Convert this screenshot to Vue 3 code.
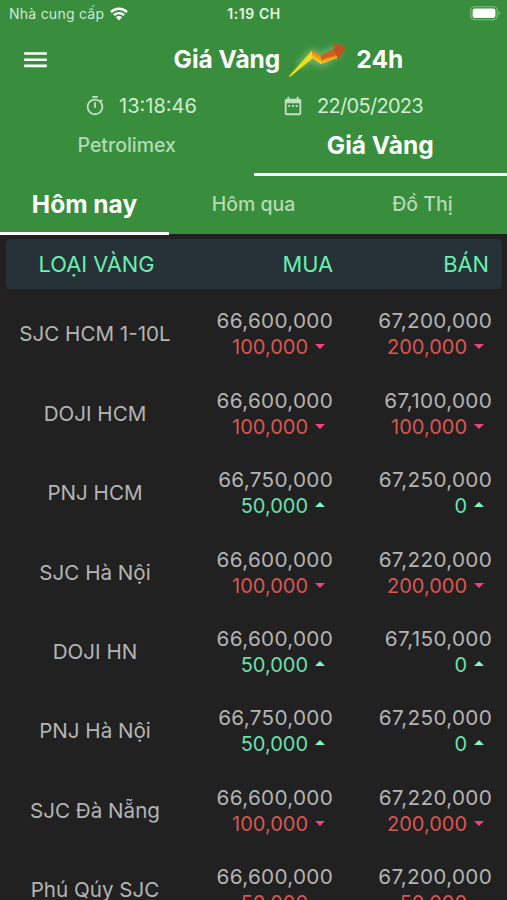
<script setup>
const rows = [
  { name: 'SJC HCM 1-10L', buy: '66,600,000', buyDiff: '100,000', buyUp: false, sell: '67,200,000', sellDiff: '200,000', sellUp: false },
  { name: 'DOJI HCM', buy: '66,600,000', buyDiff: '100,000', buyUp: false, sell: '67,100,000', sellDiff: '100,000', sellUp: false },
  { name: 'PNJ HCM', buy: '66,750,000', buyDiff: '50,000', buyUp: true, sell: '67,250,000', sellDiff: '0', sellUp: true },
  { name: 'SJC Hà Nội', buy: '66,600,000', buyDiff: '100,000', buyUp: false, sell: '67,220,000', sellDiff: '200,000', sellUp: false },
  { name: 'DOJI HN', buy: '66,600,000', buyDiff: '50,000', buyUp: true, sell: '67,150,000', sellDiff: '0', sellUp: true },
  { name: 'PNJ Hà Nội', buy: '66,750,000', buyDiff: '50,000', buyUp: true, sell: '67,250,000', sellDiff: '0', sellUp: true },
  { name: 'SJC Đà Nẵng', buy: '66,600,000', buyDiff: '100,000', buyUp: false, sell: '67,220,000', sellDiff: '200,000', sellUp: false },
  { name: 'Phú Qúy SJC', buy: '66,600,000', buyDiff: '50,000', buyUp: false, sell: '67,200,000', sellDiff: '50,000', sellUp: false },
]
</script>

<template>
  <div class="screen">
    <header class="top">
      <div class="status">
        <div class="carrier">
          <span>Nhà cung cấp</span>
          <svg class="wifi" viewBox="0 0 18 14">
            <g fill="none" stroke="#fff" stroke-width="2.4">
              <path d="M1 5.1a11.3 11.3 0 0 1 16 0" />
              <path d="M3.9 8.2a7.2 7.2 0 0 1 10.2 0" />
            </g>
            <path d="M9 13.6 5.9 10.3a4.4 4.4 0 0 1 6.2 0z" fill="#fff" />
          </svg>
        </div>
        <span class="clock">1:19 CH</span>
        <div class="power">
          <svg class="battery" viewBox="0 0 31 15">
            <rect x=".75" y=".75" width="26.5" height="13" rx="4" fill="none" stroke="#84bd87" stroke-width="1.1" />
            <rect x="2.6" y="2.6" width="22.8" height="9.3" rx="2.2" fill="#fff" />
            <path d="M28.600 5v4.600c1.800-.8 1.800-3.800 0-4.600z" fill="#84bd87" />
          </svg>
        </div>
      </div>

      <div class="bar">
        <svg class="menu" viewBox="0 0 24 16">
          <path d="M.2 1.500h22.600M.2 7.700h22.600M.2 13.900h22.600" stroke="#fff" stroke-width="2.600" />
        </svg>
        <h1 class="title">
          <span class="t1">Giá Vàng</span>
          <svg class="trend" viewBox="0 0 76 56">
            <defs>
              <linearGradient id="shaft" gradientUnits="userSpaceOnUse" x1="46" y1="20" x2="49.500" y2="31">
                <stop offset="0" stop-color="#c05a22" />
                <stop offset=".55" stop-color="#d8621c" />
                <stop offset=".72" stop-color="#f0a01c" />
                <stop offset="1" stop-color="#f6dc16" />
              </linearGradient>
              <linearGradient id="bend" gradientUnits="userSpaceOnUse" x1="38" y1="21.500" x2="34" y2="29">
                <stop offset="0" stop-color="#d0701e" />
                <stop offset=".5" stop-color="#eea01c" />
                <stop offset="1" stop-color="#f6e016" />
              </linearGradient>
              <filter id="glow" x="-40%" y="-40%" width="180%" height="180%">
                <feGaussianBlur stdDeviation="3.6" />
              </filter>
            </defs>
            <path d="M18 35 31 20l10 5 15-8 3 5-17 12-9-5z" fill="#b4dba8" stroke="#b4dba8" stroke-width="4" opacity=".5" filter="url(#glow)" />
            <path d="M9 45 32 19.500l3 5.500-2.500 2.500L10 46z" fill="#f0dc1c" />
            <path d="M32 19.500 41 24.500v8.500l-9-6z" fill="url(#bend)" />
            <path d="M40.900 24.500 56 17l2.500 9.500L41 33z" fill="url(#shaft)" />
            <path d="M54 12.500 66 15.500 58.500 28.500 55 22z" fill="#c5501f" />
          </svg>
          <span class="t2">24h</span>
        </h1>
      </div>

      <div class="moment">
        <div class="time">
          <svg class="icon" viewBox="0 0 24 24" fill="#c3dfc3">
            <path d="M15 1H9v2h6V1zm-4 13h2V8h-2v6zm8.030-6.610 1.420-1.420c-.43-.51-.9-.99-1.410-1.410l-1.420 1.420A8.962 8.962 0 0 0 12 4a9 9 0 1 0 9 9c0-2.120-.74-4.070-1.970-5.610zM12 20c-3.870 0-7-3.130-7-7s3.130-7 7-7 7 3.130 7 7-3.130 7-7 7z" />
          </svg>
          <span>13:18:46</span>
        </div>
        <div class="date">
          <svg class="icon" viewBox="0 0 24 24" fill="#c3dfc3">
            <path d="M9 11H7v2h2v-2zm4 0h-2v2h2v-2zm4 0h-2v2h2v-2zm2-7h-1V2h-2v2H8V2H6v2H5c-1.110 0-1.990.9-1.990 2L3 20a2 2 0 0 0 2 2h14c1.100 0 2-.9 2-2V6c0-1.100-.9-2-2-2zm0 16H5V9h14v11z" />
          </svg>
          <span>22/05/2023</span>
        </div>
      </div>

      <nav class="tabs main-tabs">
        <span class="tab petrol">Petrolimex</span>
        <span class="tab active gold">Giá Vàng</span>
      </nav>
      <nav class="tabs day-tabs">
        <span class="tab active today">Hôm nay</span>
        <span class="tab yesterday">Hôm qua</span>
        <span class="tab chart">Đồ Thị</span>
      </nav>
    </header>

    <main class="list">
      <div class="head">
        <span class="h-name">LOẠI VÀNG</span>
        <span class="h-buy">MUA</span>
        <span class="h-sell">BÁN</span>
      </div>
      <div v-for="row in rows" :key="row.name" class="row">
        <div class="name">{{ row.name }}</div>
        <div class="cell buy">
          <div class="price">{{ row.buy }}</div>
          <div class="diff" :class="{ up: row.buyUp }">
            <span>{{ row.buyDiff }}</span>
            <svg class="caret" viewBox="0 0 10 5"><path :d="row.buyUp ? 'M0 5 5 0l5 5z' : 'M0 0h10L5 5z'" /></svg>
          </div>
        </div>
        <div class="cell sell">
          <div class="price">{{ row.sell }}</div>
          <div class="diff" :class="{ up: row.sellUp }">
            <span>{{ row.sellDiff }}</span>
            <svg class="caret" viewBox="0 0 10 5"><path :d="row.sellUp ? 'M0 5 5 0l5 5z' : 'M0 0h10L5 5z'" /></svg>
          </div>
        </div>
      </div>
    </main>
  </div>
</template>

<style>
body {
  background: #212121;
}
</style>

<style scoped>
.screen {
  width: 507px;
  height: 900px;
  overflow: hidden;
  background: #212121;
  font-family: Inter, "Noto Sans", sans-serif;
  white-space: nowrap;
}
.top {
  height: 234px;
  background: #388e3c;
  color: #fff;
}
.status {
  height: 28px;
  display: grid;
  grid-template-columns: 1fr auto 1fr;
  align-items: center;
  padding: 0 6px 0 9px;
  font-size: 14px;
  line-height: 28px;
}
.carrier {
  display: flex;
  align-items: center;
  gap: 6px;
  color: #d3e8d4;
  letter-spacing: 0.25px;
}
.wifi {
  width: 18px;
  height: 14px;
  margin-top: -1px;
}
.clock {
  font-weight: 600;
  letter-spacing: 0.6px;
  margin-left: -2px;
  color: #e6f3e6;
}
.power {
  display: flex;
  justify-content: flex-end;
}
.battery {
  width: 31px;
  height: 15px;
  margin-top: -1px;
}
.bar {
  height: 64px;
  display: flex;
  align-items: center;
  padding-left: 24px;
}
.menu {
  width: 24px;
  height: 16px;
}
.title {
  display: flex;
  align-items: center;
  margin: -2px 0 0 125.5px;
  font-size: 24.5px;
  line-height: 56px;
  font-weight: 700;
}
.trend {
  width: 76px;
  height: 56px;
}
.moment {
  height: 28px;
  display: flex;
  align-items: center;
  font-size: 20px;
  color: #d3ebd3;
}
.time,
.date {
  display: flex;
  align-items: center;
  gap: 13px;
}
.date {
  letter-spacing: -0.7px;
}
.time {
  width: 198px;
  padding-left: 84px;
}
.icon {
  width: 22px;
  height: 22px;
}
.tabs {
  display: grid;
  text-align: center;
  color: #b5dab6;
  font-size: 19.5px;
}
.main-tabs {
  height: 56px;
  grid-template-columns: 1fr 1fr;
}
.day-tabs {
  height: 58px;
  grid-template-columns: 1fr 1fr 1fr;
}
.tab {
  box-sizing: border-box;
  line-height: 51px;
  font-weight: 500;
  border-bottom: 3px solid transparent;
}
.day-tabs .tab {
  line-height: 56px;
}
.tab.active {
  border-color: #fff;
  color: #fff;
  font-weight: 700;
  font-size: 24.500px;
}
.list {
  padding: 5px 5px 0 6px;
}
.head {
  height: 50px;
  display: grid;
  grid-template-columns: 181px 146px 1fr;
  align-items: center;
  margin-bottom: 5.7px;
  padding-right: 13px;
  border-radius: 4px;
  background: #263238;
  color: #69f0ae;
  font-size: 21.8px;
  line-height: 51px;
}
.h-name {
  text-align: center;
}
.h-buy,
.h-sell {
  text-align: right;
}
.row {
  height: 79.4px;
  display: grid;
  grid-template-columns: 178px 149px 1fr;
  align-items: center;
  padding-right: 10px;
  color: #b4b4b4;
}
.name {
  text-align: center;
  font-size: 20.600px;
  line-height: 26px;
}
.cell {
  display: flex;
  flex-direction: column;
  align-items: flex-end;
}
.price,
.diff {
  line-height: 26px;
}
.price {
  font-size: 20.700px;
  letter-spacing: 0.3px;
}
.diff {
  display: flex;
  align-items: center;
  gap: 7px;
  padding-right: 8px;
  font-size: 20px;
  color: #dc5550;
}
.caret {
  width: 10px;
  height: 5px;
  margin-bottom: 1px;
  fill: #f0407f;
}
.diff.up {
  color: #6ce0aa;
}
.up .caret {
  margin-bottom: 3px;
  fill: #80f8c0;
}
</style>
